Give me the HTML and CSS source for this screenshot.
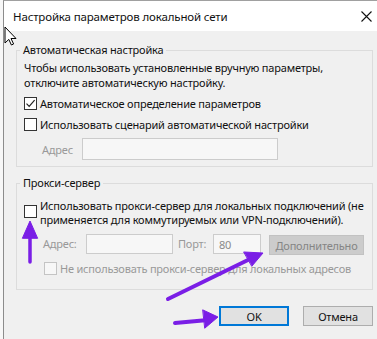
FILE: index.html
```html
<!DOCTYPE html>
<html lang="ru">
  <head>
    <meta charset="UTF-8" />
    <meta name="viewport" content="width=device-width, initial-scale=1.0" />
    <title>Настройка параметров локальной сети</title>
    <link rel="stylesheet" href="styles.css">
  </head>
  <body>
    <div class="window">
      <div class="title-bar">
        <span class="title">Настройка параметров локальной сети</span>
        <span class="close" aria-label="Закрыть">
          <svg width="11" height="11" viewBox="0 0 11 11">
            <path d="M0.5 0.5 L10.5 10.5 M10.5 0.5 L0.5 10.5" stroke="#111" stroke-width="1.1" fill="none" />
          </svg>
        </span>
      </div>

      <div class="content">
        <fieldset class="group group-auto">
          <legend>Автоматическая настройка</legend>
          <p class="hint">
            Чтобы использовать установленные вручную параметры,<br />
            отключите автоматическую настройку.
          </p>
          <label class="check">
            <span class="box">
              <svg width="11" height="11" viewBox="0 0 11 11">
                <path d="M1.5 5.6 L4.2 8.4 L9.6 2.2" stroke="#222" stroke-width="1.2" fill="none" />
              </svg>
            </span>
            <span>Автоматическое определение параметров</span>
          </label>
          <label class="check">
            <span class="box"></span>
            <span>Использовать сценарий автоматической настройки</span>
          </label>
          <div class="field-row script-row">
            <span class="muted label-script">Адрес</span>
            <span class="input input-script"></span>
          </div>
        </fieldset>

        <fieldset class="group group-proxy">
          <legend>Прокси-сервер</legend>
          <label class="check check-top">
            <span class="box"></span>
            <span>
              Использовать прокси-сервер для локальных подключений (не<br />
              применяется для коммутируемых или VPN-подключений).
            </span>
          </label>
          <div class="field-row proxy-row">
            <span class="muted label-address">Адрес:</span>
            <span class="input input-address"></span>
            <span class="muted label-port">Порт:</span>
            <span class="input input-port">80</span>
            <span class="button button-disabled">Дополнительно</span>
          </div>
          <label class="check check-sub">
            <span class="box box-disabled"></span>
            <span class="muted">Не использовать прокси-сервер для локальных адресов</span>
          </label>
        </fieldset>

        <div class="actions">
          <span class="button button-default">OK</span>
          <span class="button">Отмена</span>
        </div>
      </div>
    </div>

    <svg class="overlay" width="377" height="339" viewBox="0 0 377 339">
      <!-- mouse cursor -->
      <path d="M5 27 L5 43 L8.8 39.4 L11.4 45 L13.6 44 L11 38.5 L16 38.5 Z"
            fill="#fff" stroke="#000" stroke-width="1" stroke-linejoin="round" />
      <!-- purple hint arrows -->
      <g fill="#7a1ee6" stroke="#7a1ee6" stroke-linecap="round" stroke-linejoin="round">
        <path d="M30 262 L30 232" stroke-width="3.5" fill="none" />
        <path d="M22.5 238 L30 221 L37.5 238 Z" stroke-width="1" />
        <path d="M168 299 L250 259" stroke-width="4" fill="none" />
        <path d="M244 252 L263 253 L252 266 Z" stroke-width="1" />
        <path d="M175 323 L208 320" stroke-width="4" fill="none" />
        <path d="M203 310 L218 317 L205 328 Z" stroke-width="1" />
      </g>
    </svg>
  </body>
</html>
```

FILE: styles.css
```css
:root {
  --dialog-bg: #f0f0f0;
  --text: #111111;
  --muted: #999999;
  --group-border: #dcdcdc;
  --input-border: #cccccc;
  --accent: #0078d7;
}

html,
body {
  margin: 0;
  padding: 0;
}

body {
  position: relative;
  width: 377px;
  height: 339px;
  overflow: hidden;
  font-family: "Noto Sans", "Open Sans", sans-serif;
  font-size: 11px;
  letter-spacing: -0.2px;
  white-space: nowrap;
  color: var(--text);
  background: #f7f7f7;
}

.window {
  margin-left: 3px;
  height: 339px;
  border-left: 1px solid #8c8c8c;
  border-top: 1px solid #a0a0a0;
  box-sizing: border-box;
  background: var(--dialog-bg);
}

.title-bar {
  height: 30px;
  display: flex;
  align-items: center;
  justify-content: space-between;
  padding: 0 5px 0 9px;
  background: #ffffff;
}

.title {
  font-size: 11.5px;
  letter-spacing: -0.15px;
  color: #111;
}

.close {
  display: flex;
  width: 11px;
}

.content {
  padding: 12px 0 0 12px;
}

.group {
  box-sizing: border-box;
  width: 357px;
  margin: 0;
  padding: 0 0 6px 7px;
  border: 1px solid var(--group-border);
}

.group legend {
  padding: 0 3px;
  margin-left: -4px;
  line-height: 14px;
}

.hint {
  margin: 3px 0 3px 0;
  line-height: 15px;
}

.check {
  display: flex;
  align-items: center;
  gap: 3px;
  height: 21px;
}

.box {
  width: 11px;
  height: 11px;
  border: 1px solid #333;
  background: #fff;
  display: flex;
  align-items: center;
  justify-content: center;
  flex: none;
}

.box-disabled {
  border-color: #c4c4c4;
  background: #f7f7f7;
}

.muted {
  color: var(--muted);
}

.field-row {
  display: flex;
}

.script-row {
  align-items: center;
  margin-top: 3px;
  padding-left: 18px;
}

.label-script {
  width: 40px;
}

.input {
  box-sizing: border-box;
  height: 22px;
  border: 1px solid var(--input-border);
  background: #f7f7f7;
  color: #8a8a8a;
  display: flex;
  align-items: center;
  padding-left: 5px;
}

.input-script {
  width: 196px;
}

.group-proxy {
  margin-top: 9px;
  padding-bottom: 10px;
}

.check-top {
  align-items: flex-start;
  line-height: 14px;
  height: auto;
  margin-top: 9px;
}

.check-top .box {
  margin-top: 6px;
}

.proxy-row {
  align-items: flex-start;
  margin-top: 7px;
  padding-left: 19px;
  height: 21px;
}

.proxy-row .muted {
  line-height: 20px;
}

.label-address {
  width: 43px;
}

.label-port {
  width: 35px;
  margin-left: 5px;
}

.input-address {
  width: 87px;
  height: 20px;
}

.input-port {
  width: 48px;
  height: 20px;
}

.check-sub {
  margin-top: 3px;
  padding-left: 20px;
}

.button {
  box-sizing: border-box;
  display: flex;
  align-items: center;
  justify-content: center;
  width: 70px;
  height: 20px;
  border: 1px solid #adadad;
  background: #e1e1e1;
}

.button-disabled {
  width: 95px;
  margin: 1px 0 0 8px;
  border-color: #c2c2c2;
  background: #cccccc;
  color: #858585;
}

.button-default {
  border: 2px solid var(--accent);
}

.actions {
  width: 357px;
  display: flex;
  justify-content: flex-end;
  gap: 14px;
  margin-top: 16px;
}

.overlay {
  position: absolute;
  top: 0;
  left: 0;
  pointer-events: none;
}
```
